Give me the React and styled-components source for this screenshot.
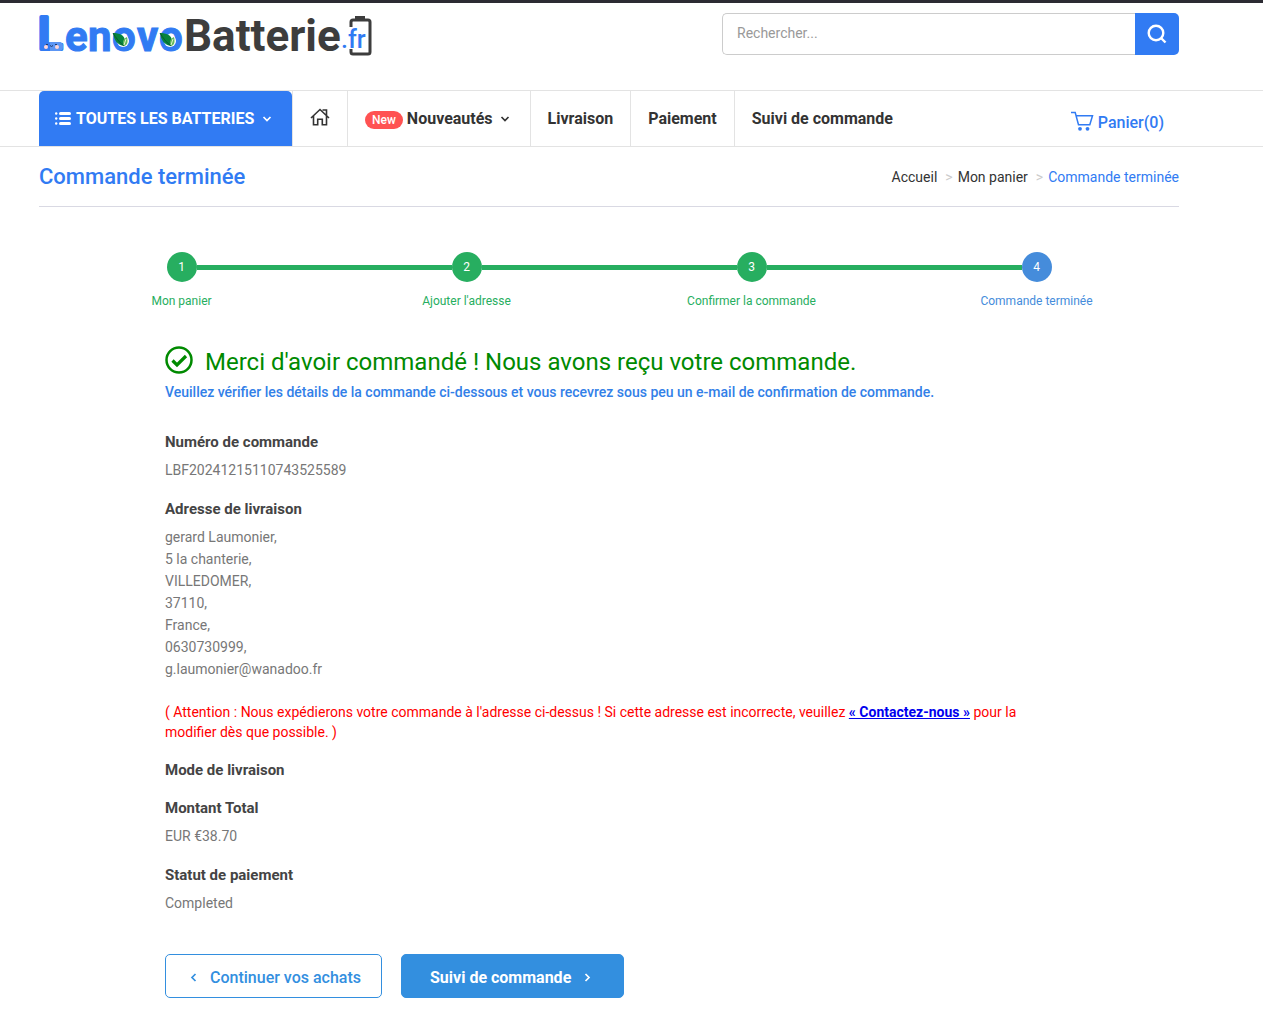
import React from "react";
import styled, { createGlobalStyle } from "styled-components";

const GlobalStyle = createGlobalStyle`
  :root {
    --blue: #317bf3;
    --action: #338fdf;
    --green: #27ae60;
    --current: #458cdb;
    --dark: #333;
    --muted: #777;
    --line: #e3e3e3;
  }
  * {
    box-sizing: border-box;
  }
  body {
    margin: 0;
    background: #fff;
    color: var(--dark);
    font-family: Roboto, "Liberation Sans", sans-serif;
    font-size: 14px;
    line-height: 20px;
  }
  a {
    color: inherit;
    text-decoration: none;
  }
`;

const Page = styled.div`
  border-top: 3px solid #2c2b33;
`;

const Container = styled.div`
  padding: 0 84px 0 39px;
`;

const Header = styled(Container)`
  display: flex;
  justify-content: space-between;
  align-items: flex-start;
  height: 87px;
`;

const LogoLink = styled.a`
  display: block;
  svg {
    display: block;
  }
`;

const SearchForm = styled.form`
  display: flex;
  flex: 0 1 457px;
  height: 42px;
  margin-top: 10px;
`;

const SearchInput = styled.input`
  flex: 1;
  min-width: 0;
  border: 1px solid #ccc;
  border-right: 0;
  border-radius: 5px 0 0 5px;
  padding: 0 14px 2px;
  font: inherit;
  &::placeholder {
    color: #999;
  }
`;

const SearchButton = styled.button`
  display: flex;
  align-items: center;
  justify-content: center;
  width: 44px;
  padding: 0;
  border: 0;
  border-radius: 0 5px 5px 0;
  background: var(--blue);
  color: #fff;
  cursor: pointer;
`;

const NavBar = styled.nav`
  border-top: 1px solid var(--line);
  border-bottom: 1px solid var(--line);
`;

const NavRow = styled(Container)`
  display: flex;
  height: 55px;
`;

const Categories = styled.button`
  display: flex;
  align-items: center;
  gap: 5px;
  width: 253px;
  padding: 0 16px;
  border: 0;
  border-radius: 5px 5px 0 0;
  background: var(--blue);
  color: #fff;
  font: 700 16px/20px Roboto, sans-serif;
  white-space: nowrap;
  cursor: pointer;
`;

const NavItem = styled.a`
  display: flex;
  align-items: center;
  gap: 4px;
  padding: 0 17px;
  border-left: 1px solid var(--line);
  font-size: 16px;
  font-weight: 700;
  white-space: nowrap;
`;

const NewBadge = styled.span`
  margin-top: 3px;
  padding: 0 7px;
  border-radius: 9px;
  background: #ff5252;
  color: #fff;
  font-size: 12px;
  font-weight: 500;
  line-height: 18px;
`;

const Cart = styled.a`
  display: flex;
  align-items: center;
  gap: 4px;
  margin-left: auto;
  padding: 8px 15px 0 0;
  color: var(--blue);
  font-size: 16px;
  font-weight: 500;
  svg {
    margin-bottom: 4px;
  }
`;

const TitleRow = styled.div`
  display: flex;
  justify-content: space-between;
  align-items: center;
  height: 60px;
  border-bottom: 1px solid #d9d9e3;
`;

const Title = styled.h1`
  margin: 0;
  color: var(--blue);
  font-size: 22px;
  line-height: 24px;
  font-weight: 500;
`;

const Breadcrumb = styled.ol`
  display: flex;
  margin: 0;
  padding: 0;
  list-style: none;
  li + li::before {
    content: ">";
    margin: 0 5px 0 8px;
    color: #ccc;
  }
  li:last-child a {
    color: var(--blue);
  }
`;

const Steps = styled.ol`
  display: flex;
  margin: 45px 0 0;
  padding: 0;
  list-style: none;
`;

const Step = styled.li`
  flex: 1;
  color: ${(props) => (props.$current ? "var(--current)" : "var(--green)")};
  font-size: 12px;
  text-align: center;
`;

const StepTrack = styled.div`
  display: flex;
  align-items: center;
  margin-bottom: 9px;
`;

const StepLine = styled.span`
  flex: 1;
  height: 5px;
  background: ${(props) => (props.$hidden ? "transparent" : "var(--green)")};
`;

const StepDot = styled.span`
  width: 30px;
  border-radius: 50%;
  background: currentColor;
  line-height: 30px;
  span {
    color: #fff;
  }
`;

const Order = styled.main`
  padding: 33px 126px 38px;
`;

const Thanks = styled.h2`
  display: flex;
  align-items: center;
  gap: 12px;
  margin: 0;
  color: #008a00;
  font-size: 24px;
  line-height: 36px;
  font-weight: 400;
  svg {
    flex: none;
    margin-bottom: 4px;
  }
`;

const Intro = styled.p`
  margin: 2px 0 30px;
  color: #3280e8;
  font-weight: 500;
`;

const Details = styled.dl`
  display: flex;
  flex-direction: column;
  gap: 18px;
  margin: 0;
`;

const Term = styled.dt`
  color: #444;
  font-size: 15px;
  font-weight: 700;
`;

const Value = styled.dd`
  margin: 7px 0 0;
  color: var(--muted);
  line-height: 22px;
`;

const Warning = styled.p`
  margin: 22px 0 0;
  color: #f00;
  line-height: 20px;
  a {
    color: #00e;
    font-weight: 700;
    text-decoration: underline;
  }
`;

const Actions = styled.div`
  display: flex;
  gap: 19px;
  margin-top: 40px;
`;

const ActionButton = styled.button`
  display: flex;
  align-items: center;
  justify-content: center;
  gap: 8px;
  height: 44px;
  padding: 3px ${(props) => (props.$filled ? 28 : 20)}px 0;
  border: 1px solid var(--action);
  border-radius: 5px;
  background: ${(props) => (props.$filled ? "var(--action)" : "#fff")};
  color: ${(props) => (props.$filled ? "#fff" : "var(--action)")};
  font: ${(props) => (props.$filled ? 700 : 500)} 16px/20px Roboto, sans-serif;
  cursor: pointer;
`;

const chevrons = {
  down: "M4.5 6L8 9.500l3.500-3.500",
  left: "M9.500 4L6 7.500l3.500 3.500",
  right: "M6.500 4l3.500 3.500L6.500 11",
};

function Chevron({ to }) {
  return (
    <svg width="16" height="16" viewBox="0 0 16 16" fill="none" stroke="currentColor" strokeWidth="1.700" aria-hidden="true">
      <path d={chevrons[to]} />
    </svg>
  );
}

function Leaf({ x }) {
  return (
    <g transform={`translate(${x} 0)`}>
      <circle cx="8" cy="28" r="6" fill="#fff" />
      <path d="M-2 20c6 0 12 2 12 8 1 3 0 4-1 5C3 32-1 28-2 20z" fill="#07833d" />
      <path d="M-2 20c3 5 6 9 11 13" stroke="#065b2d" strokeWidth="1" fill="none" />
      <path d="M12 24c-4 2-5 5-3 9 4-1 4-5 3-9z" fill="#64b85d" />
      <path d="M11 26l-2 6" stroke="#dff2c8" strokeWidth="1" />
    </g>
  );
}

function Logo() {
  return (
    <svg width="334" height="66" viewBox="0 -10 334 66" role="img" aria-label="LenovoBatterie.fr" fontFamily="Roboto, sans-serif" fontWeight="700">
      <rect x="5" y="29" width="19" height="9" rx="4.5" fill="#5c96f4" />
      <text x="-1" y="36" fontSize="45" fontWeight="500" fill="#317bf3" stroke="#317bf3" strokeWidth="4" strokeLinejoin="round">L</text>
      <path d="M11 29h9q4 0 4 4.5t-4 4.500h-9z" fill="#5c96f4" />
      <g fill="#ffd5d6">
        <circle cx="7" cy="34" r="2" />
        <circle cx="18" cy="34" r="2" />
      </g>
      <path d="M7 31.500h2M16 31.500h2M11 32.500q1.500 2 3 0" stroke="#263a65" strokeWidth="1" fill="none" />
      <text x="26" y="38" fontSize="42" fill="#317bf3" stroke="#317bf3" strokeWidth="1">
        e<tspan x="49">n</tspan><tspan x="73">o</tspan><tspan x="98">v</tspan><tspan x="120">o</tspan>
      </text>
      <Leaf x={76} />
      <Leaf x={123} />
      <text x="145" y="38" fontSize="44" fill="#3d3d3d">Batterie</text>
      <path d="M312 14V9q0-2 2-2h15q2 0 2 2v30q0 2-2 2h-15q-2 0-2-2v-3" stroke="#3d3d3d" strokeWidth="3" fill="none" />
      <path d="M316 3h10v4h-10z" fill="#3d3d3d" />
      <text x="302" y="35" fontSize="25" fontWeight="500" fill="#317bf3">.fr</text>
    </svg>
  );
}

function SearchIcon() {
  return (
    <svg width="20" height="20" viewBox="0 0 20 20" fill="none" stroke="currentColor" strokeWidth="2.4" aria-hidden="true">
      <circle cx="9" cy="9" r="7.3" />
      <path d="M14 14l4.500 4.500" />
    </svg>
  );
}

function ListIcon() {
  return (
    <svg width="16" height="16" viewBox="0 0 16 16" fill="currentColor" aria-hidden="true">
      {[2, 7, 12].map((y) => (
        <g key={y}>
          <circle cx="1.2" cy={y + 0.5} r="1.2" />
          <rect x="4" y={y - 1} width="12" height="3" rx="1.5" />
        </g>
      ))}
    </svg>
  );
}

function HomeIcon() {
  return (
    <svg width="20" height="24" viewBox="0 0 20 24" fill="none" stroke="currentColor" strokeWidth="1.6" aria-hidden="true">
      <path d="M1 11l9-8.5 9 8.5M12.500 3h4v5.500M3.500 9v8.700h4.200v-5.500h4.600v5.500h4.200V9" />
    </svg>
  );
}

function CartIcon() {
  return (
    <svg width="23" height="20" viewBox="0 0 23 20" fill="none" stroke="currentColor" strokeWidth="1.5" aria-hidden="true">
      <path d="M0 1.500h4.200l3.300 12.200h11.300l2.700-9H5" />
      <circle cx="9" cy="17.800" r="1.900" fill="currentColor" stroke="none" />
      <circle cx="16.500" cy="17.800" r="1.900" fill="currentColor" stroke="none" />
    </svg>
  );
}

function CheckIcon() {
  return (
    <svg width="28" height="28" viewBox="0 0 28 28" fill="none" stroke="currentColor" aria-hidden="true">
      <circle cx="14" cy="14" r="12.5" strokeWidth="2.5" />
      <path d="M7.500 14.500l4.500 4.500 9-9" strokeWidth="3.2" />
    </svg>
  );
}

const steps = ["Mon panier", "Ajouter l'adresse", "Confirmer la commande", "Commande terminée"];

const address = [
  "gerard Laumonier,",
  "5 la chanterie,",
  "VILLEDOMER,",
  "37110,",
  "France,",
  "0630730999,",
  "g.laumonier@wanadoo.fr",
];

function Progress() {
  const last = steps.length - 1;
  return (
    <Steps>
      {steps.map((label, i) => (
        <Step key={label} $current={i === last}>
          <StepTrack>
            <StepLine $hidden={i === 0} />
            <StepDot>
              <span>{i + 1}</span>
            </StepDot>
            <StepLine $hidden={i === last} />
          </StepTrack>
          {label}
        </Step>
      ))}
    </Steps>
  );
}

export default function App() {
  return (
    <Page>
      <GlobalStyle />
      <Header as="header">
        <LogoLink href="#">
          <Logo />
        </LogoLink>
        <SearchForm role="search">
          <SearchInput type="text" placeholder="Rechercher..." aria-label="Rechercher" />
          <SearchButton type="button" aria-label="Rechercher">
            <SearchIcon />
          </SearchButton>
        </SearchForm>
      </Header>
      <NavBar>
        <NavRow>
          <Categories type="button">
            <ListIcon />
            TOUTES LES BATTERIES
            <Chevron to="down" />
          </Categories>
          <NavItem href="#" aria-label="Accueil">
            <HomeIcon />
          </NavItem>
          <NavItem href="#">
            <NewBadge>New</NewBadge>
            Nouveautés
            <Chevron to="down" />
          </NavItem>
          <NavItem href="#">Livraison</NavItem>
          <NavItem href="#">Paiement</NavItem>
          <NavItem href="#">Suivi de commande</NavItem>
          <Cart href="#">
            <CartIcon />
            Panier(0)
          </Cart>
        </NavRow>
      </NavBar>
      <Container>
        <TitleRow>
          <Title>Commande terminée</Title>
          <Breadcrumb>
            <li><a href="#">Accueil</a></li>
            <li><a href="#">Mon panier</a></li>
            <li><a href="#">Commande terminée</a></li>
          </Breadcrumb>
        </TitleRow>
        <Progress />
        <Order>
          <Thanks>
            <CheckIcon />
            Merci d'avoir commandé ! Nous avons reçu votre commande.
          </Thanks>
          <Intro>
            Veuillez vérifier les détails de la commande ci-dessous et vous recevrez sous peu un e-mail de confirmation de commande.
          </Intro>
          <Details>
            <div>
              <Term>Numéro de commande</Term>
              <Value>LBF20241215110743525589</Value>
            </div>
            <div>
              <Term>Adresse de livraison</Term>
              <Value>
                {address.map((line) => (
                  <div key={line}>{line}</div>
                ))}
                <Warning>
                  ( Attention : Nous expédierons votre commande à l'adresse ci-dessus ! Si cette adresse est incorrecte, veuillez{" "}
                  <a href="#">« Contactez-nous »</a> pour la modifier dès que possible. )
                </Warning>
              </Value>
            </div>
            <div>
              <Term>Mode de livraison</Term>
            </div>
            <div>
              <Term>Montant Total</Term>
              <Value>EUR €38.70</Value>
            </div>
            <div>
              <Term>Statut de paiement</Term>
              <Value>Completed</Value>
            </div>
          </Details>
          <Actions>
            <ActionButton type="button">
              <Chevron to="left" />
              Continuer vos achats
            </ActionButton>
            <ActionButton type="button" $filled>
              Suivi de commande
              <Chevron to="right" />
            </ActionButton>
          </Actions>
        </Order>
      </Container>
    </Page>
  );
}
